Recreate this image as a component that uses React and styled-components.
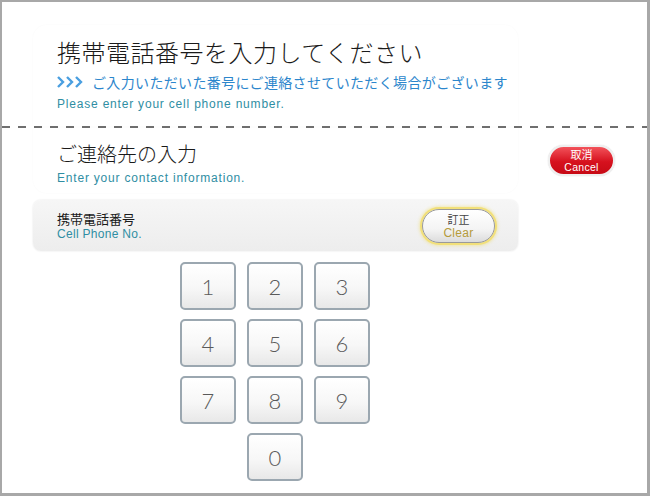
import React from 'react'
import styled, { createGlobalStyle } from 'styled-components'

const GlobalStyle = createGlobalStyle`
  html, body {
    margin: 0;
    padding: 0;
    background: #ffffff;
  }
  body {
    font-family: "Noto Sans CJK JP", "Liberation Sans", sans-serif;
  }
`

const Frame = styled.div`
  box-sizing: border-box;
  width: 650px;
  height: 496px;
  border-style: solid;
  border-color: #a8a8a8;
  border-width: 2px 3px 3px 2px;
  background: #ffffff;
  overflow: hidden;
  display: flex;
  flex-direction: column;
`

const Header = styled.div`
  padding-top: 23px;
`

const Card = styled.div`
  box-sizing: border-box;
  margin-left: 31px;
  width: 485px;
  padding: ${p => (p.$top ? '13px 0 15px 24px' : '14px 0 8px 24px')};
  border-radius: ${p => (p.$top ? '14px 14px 0 0' : '0 0 14px 14px')};
  box-shadow: 0 0 2px rgba(0, 0, 0, 0.03);
`

const Title = styled.h1`
  margin: 0;
  font-family: "Noto Sans CJK JP", sans-serif;
  font-weight: 300;
  font-size: 24px;
  line-height: 28px;
  letter-spacing: 0.5px;
  color: #1a1a1a;
`

const Lead = styled.p`
  margin: 7px 0 0;
  display: flex;
  align-items: center;
  gap: 9px;
  font-family: "Noto Sans CJK JP", sans-serif;
  font-size: 14px;
  line-height: 18px;
  letter-spacing: 0.35px;
  color: #2c86cc;
`

const Note = styled.p`
  margin: ${p => p.$gap || 6}px 0 0;
  font-family: "Liberation Sans", Arial, sans-serif;
  font-size: 12px;
  line-height: 14px;
  letter-spacing: 0.8px;
  color: #2f8ea3;
`

const Dashed = styled.div`
  height: 2px;
  flex-shrink: 0;
  background: repeating-linear-gradient(to right, #6f6f6f 0 8px, transparent 8px 16px);
`

const Row = styled.div`
  display: flex;
  align-items: flex-start;
`

const SectionTitle = styled.h2`
  margin: 0;
  font-family: "Noto Sans CJK JP", sans-serif;
  font-weight: 300;
  font-size: 20px;
  line-height: 24px;
  color: #1a1a1a;
`

const CancelButton = styled.button`
  box-sizing: border-box;
  margin: 17px 0 0 30px;
  width: 67px;
  height: 31px;
  padding: 0;
  border: 2px solid #efefef;
  border-radius: 16px;
  background: linear-gradient(#f2525a, #d6111e 55%, #c70a15);
  box-shadow: 0 0 1px rgba(0, 0, 0, 0.25);
  color: #ffffff;
  display: flex;
  flex-direction: column;
  align-items: center;
  justify-content: center;
  font-family: "Noto Sans CJK JP", "Liberation Sans", sans-serif;
`

const BtnJa = styled.span`
  font-size: 11px;
  line-height: 14px;
  color: ${p => p.$color || 'inherit'};
`

const BtnEn = styled.span`
  font-family: "Liberation Sans", Arial, sans-serif;
  font-size: ${p => p.$size || 10.5}px;
  line-height: ${p => (p.$size || 10.5) + 2}px;
  letter-spacing: 0.3px;
  color: ${p => p.$color || 'inherit'};
`

const Panel = styled.div`
  box-sizing: border-box;
  margin: 7px 0 0 31px;
  width: 485px;
  height: 51px;
  padding: 0 23px 0 24px;
  border-radius: 8px;
  background: linear-gradient(#f6f6f6, #ededed);
  box-shadow: 0 0 2px rgba(0, 0, 0, 0.12);
  display: flex;
  align-items: center;
  justify-content: space-between;
`

const FieldLabel = styled.div`
  display: flex;
  flex-direction: column;
`

const FieldJa = styled.span`
  font-family: "Noto Sans CJK JP", sans-serif;
  font-size: 13px;
  line-height: 16px;
  color: #1a1a1a;
`

const FieldEn = styled.span`
  font-family: "Liberation Sans", Arial, sans-serif;
  font-size: 12px;
  line-height: 14px;
  letter-spacing: 0.3px;
  color: #2f8ea3;
`

const ClearButton = styled.button`
  box-sizing: border-box;
  width: 73px;
  height: 34px;
  padding: 0;
  border: 1.5px solid #9a9a9a;
  border-radius: 17px;
  background: linear-gradient(#ffffff, #f4f4f4 60%, #dcdcdc);
  box-shadow: 0 0 0 2px #f2e07a, 0 0 3px 3px rgba(240, 220, 100, 0.45);
  display: flex;
  flex-direction: column;
  align-items: center;
  justify-content: center;
  font-family: "Noto Sans CJK JP", "Liberation Sans", sans-serif;
  color: #444444;
`

const Keypad = styled.div`
  margin: 11px 0 0 178px;
  display: grid;
  grid-template-columns: repeat(3, 56px);
  grid-auto-rows: 48px;
  column-gap: 11px;
  row-gap: 9px;
`

const Key = styled.button`
  box-sizing: border-box;
  grid-column: ${p => p.$col || 'auto'};
  padding: 0;
  border: 2px solid #9ba7b0;
  border-radius: 5px;
  background: linear-gradient(#ffffff, #f7f7f7 55%, #e8e8e8);
  font-family: Lato, "Open Sans", sans-serif;
  font-weight: 300;
  font-size: 22px;
  color: #5a5a5a;
  display: flex;
  align-items: center;
  justify-content: center;
`

function Chevrons() {
  return (
    <svg width="26" height="12" viewBox="0 0 26 12">
      {[0, 9, 18].map(x => (
        <path
          key={x}
          d={`M${x + 1} 1 L${x + 6} 6 L${x + 1} 11`}
          fill="none"
          stroke="#4a9fe0"
          strokeWidth="2.4"
        />
      ))}
    </svg>
  )
}

const keys = ['1', '2', '3', '4', '5', '6', '7', '8', '9']

export default function App() {
  return (
    <>
      <GlobalStyle />
      <Frame>
        <Header>
          <Card $top>
            <Title>携帯電話番号を入力してください</Title>
            <Lead>
              <Chevrons />
              ご入力いただいた番号にご連絡させていただく場合がございます
            </Lead>
            <Note>Please enter your cell phone number.</Note>
          </Card>
        </Header>

        <Dashed />

        <Row>
          <Card>
            <SectionTitle>ご連絡先の入力</SectionTitle>
            <Note $gap={5}>Enter your contact information.</Note>
          </Card>
          <CancelButton>
            <BtnJa>取消</BtnJa>
            <BtnEn>Cancel</BtnEn>
          </CancelButton>
        </Row>

        <Panel>
          <FieldLabel>
            <FieldJa>携帯電話番号</FieldJa>
            <FieldEn>Cell Phone No.</FieldEn>
          </FieldLabel>
          <ClearButton>
            <BtnJa>訂正</BtnJa>
            <BtnEn $size={12} $color="#b59b3a">Clear</BtnEn>
          </ClearButton>
        </Panel>

        <Keypad>
          {keys.map(k => (
            <Key key={k}>{k}</Key>
          ))}
          <Key $col={2}>0</Key>
        </Keypad>
      </Frame>
    </>
  )
}
